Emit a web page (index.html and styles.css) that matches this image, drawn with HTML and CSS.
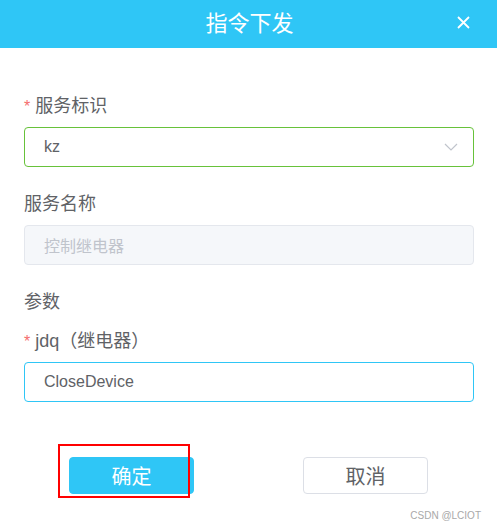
FILE: index.html
```html
<!DOCTYPE html>
<html>
<head>
    <title>指令下发</title>
    <link rel="stylesheet" href="styles.css">
</head>
<body>
    <div class="dialog">
        <div class="dialog-header">
            <span class="dialog-title">指令下发</span>
            <span class="dialog-close">
                <svg width="13" height="13" viewBox="0 0 13 13">
                    <path d="M1 1L12 12M12 1L1 12" stroke="#fff" stroke-width="1.8" fill="none"/>
                </svg>
            </span>
        </div>

        <form class="dialog-body">
            <div class="form-item item-first">
                <label class="form-label"><span class="required">*</span>服务标识</label>
                <div class="form-input select-box">
                    <span>kz</span>
                    <svg class="chevron" width="14" height="8" viewBox="0 0 14 8">
                        <path d="M1 1L7 7L13 1" stroke="#c0c4cc" stroke-width="1.2" fill="none"/>
                    </svg>
                </div>
            </div>

            <div class="form-item">
                <label class="form-label">服务名称</label>
                <div class="form-input disabled">控制继电器</div>
            </div>

            <div class="section-title">参数</div>

            <div class="form-item item-param">
                <label class="form-label"><span class="required">*</span>jdq（继电器）</label>
                <div class="form-input focused">CloseDevice</div>
            </div>
        </form>

        <div class="dialog-footer">
            <span class="mark"></span>
            <button type="button" class="btn btn-primary">确定</button>
            <button type="button" class="btn btn-default">取消</button>
        </div>

        <div class="watermark">CSDN @LCIOT</div>
    </div>
</body>
</html>
```

FILE: styles.css
```css
body {
    margin: 0;
    background-color: #fff;
    font-family: "Liberation Sans", "Noto Sans CJK SC", sans-serif;
}

.dialog {
    width: 497px;
    height: 530px;
}

.dialog-header {
    height: 48px;
    background-color: #2fc6f6;
    display: flex;
    align-items: center;
    justify-content: center;
    position: relative;
}

.dialog-title {
    color: #fff;
    font-size: 22px;
    line-height: 24px;
    margin-left: 2px;
}

.dialog-close {
    position: absolute;
    right: 27px;
    top: 16px;
    width: 13px;
    height: 13px;
    display: flex;
}

.dialog-body {
    padding: 46px 23px 0 24px;
}

.form-item {
    margin-bottom: 25px;
}

.form-label {
    display: block;
    color: #606266;
    font-size: 18px;
    line-height: 24px;
    margin-bottom: 9px;
}

.required {
    color: #f56c6c;
    font-size: 16px;
    line-height: 1;
    margin-right: 5px;
}

.form-input {
    box-sizing: border-box;
    height: 40px;
    border: 1px solid #dcdfe6;
    border-radius: 4px;
    padding: 0 15px 0 19px;
    display: flex;
    align-items: center;
    color: #606266;
    font-size: 16px;
}

.select-box {
    border-color: #67c23a;
    justify-content: space-between;
}

.disabled {
    background-color: #f5f7fa;
    border-color: #e4e7ed;
    color: #c0c4cc;
}

.focused {
    border-color: #2fc6f6;
}

.section-title {
    color: #606266;
    font-size: 18px;
    line-height: 24px;
    margin-top: 7px;
    margin-bottom: 15px;
}

.item-param {
    margin-bottom: 0;
}

.dialog-footer {
    position: relative;
    display: flex;
    gap: 109px;
    padding-left: 69px;
    margin-top: 55px;
}

.btn {
    box-sizing: border-box;
    width: 125px;
    height: 37px;
    border-radius: 4px;
    font-family: "Liberation Sans", "Noto Sans CJK SC", sans-serif;
    font-size: 20px;
    cursor: pointer;
}

.btn-primary {
    background-color: #2fc6f6;
    border: 1px solid #2fc6f6;
    color: #fff;
}

.btn-default {
    background-color: #fff;
    border: 1px solid #dcdfe6;
    color: #606266;
}

.mark {
    position: absolute;
    left: 58px;
    top: -13px;
    width: 128px;
    height: 50px;
    border: 2px solid #f00;
    z-index: 1;
}

.watermark {
    text-align: right;
    padding-right: 16px;
    margin-top: 16px;
    color: #a8a8a8;
    font-size: 10px;
    line-height: 12px;
}
```
